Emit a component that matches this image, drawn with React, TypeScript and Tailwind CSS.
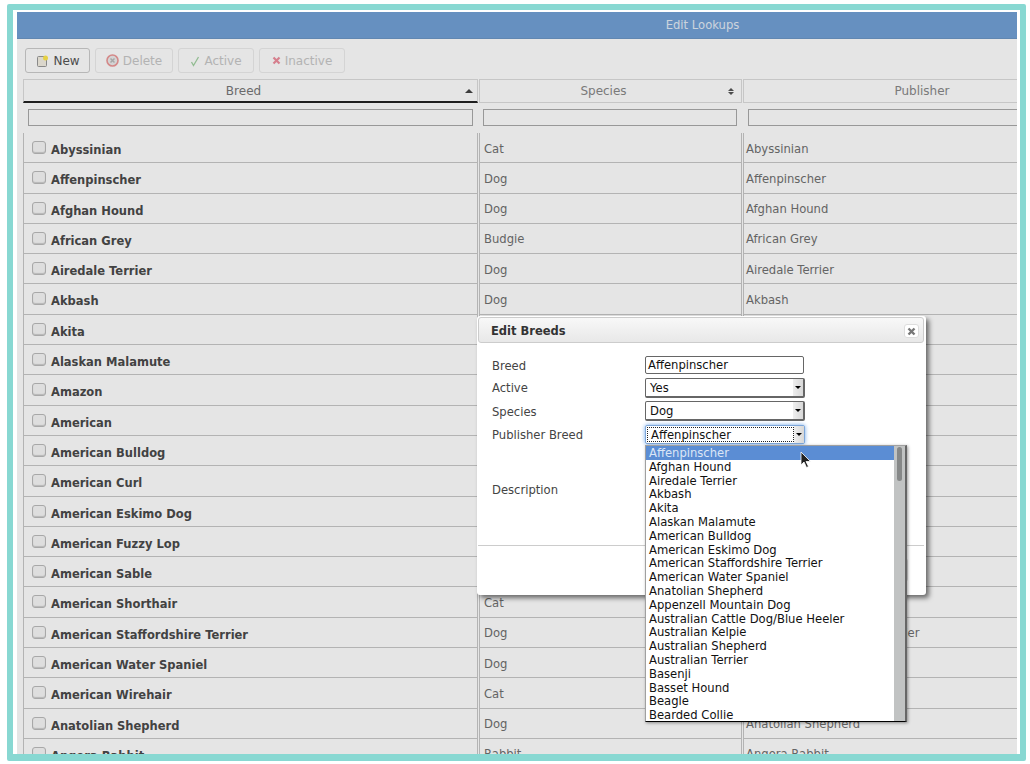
import React from 'react';

const rows = [
  ['Abyssinian', 'Cat', 'Abyssinian'],
  ['Affenpinscher', 'Dog', 'Affenpinscher'],
  ['Afghan Hound', 'Dog', 'Afghan Hound'],
  ['African Grey', 'Budgie', 'African Grey'],
  ['Airedale Terrier', 'Dog', 'Airedale Terrier'],
  ['Akbash', 'Dog', 'Akbash'],
  ['Akita', 'Dog', 'Akita'],
  ['Alaskan Malamute', 'Dog', 'Alaskan Malamute'],
  ['Amazon', 'Parrot', 'Amazon'],
  ['American', 'Rabbit', 'American'],
  ['American Bulldog', 'Dog', 'American Bulldog'],
  ['American Curl', 'Cat', 'American Curl'],
  ['American Eskimo Dog', 'Dog', 'American Eskimo Dog'],
  ['American Fuzzy Lop', 'Rabbit', 'American Fuzzy Lop'],
  ['American Sable', 'Rabbit', 'American Sable'],
  ['American Shorthair', 'Cat', 'American Shorthair'],
  ['American Staffordshire Terrier', 'Dog', 'American Staffordshire Terrier'],
  ['American Water Spaniel', 'Dog', 'American Water Spaniel'],
  ['American Wirehair', 'Cat', 'American Wirehair'],
  ['Anatolian Shepherd', 'Dog', 'Anatolian Shepherd'],
  ['Angora Rabbit', 'Rabbit', 'Angora Rabbit'],
];

const breedOptions = [
  'Affenpinscher',
  'Afghan Hound',
  'Airedale Terrier',
  'Akbash',
  'Akita',
  'Alaskan Malamute',
  'American Bulldog',
  'American Eskimo Dog',
  'American Staffordshire Terrier',
  'American Water Spaniel',
  'Anatolian Shepherd',
  'Appenzell Mountain Dog',
  'Australian Cattle Dog/Blue Heeler',
  'Australian Kelpie',
  'Australian Shepherd',
  'Australian Terrier',
  'Basenji',
  'Basset Hound',
  'Beagle',
  'Bearded Collie',
];

const SelectBox = ({ value, focused }: { value: string; focused?: boolean }) => (
  <div
    className={`flex w-[160px] items-center rounded-[2px] border bg-white text-[#111] ${
      focused
        ? 'h-[19px] border-[#7da7da] shadow-[0_0_4px_#6ea6ea]'
        : 'h-[20px] border-[#666] border-r-2 border-b-2'
    }`}
  >
    <div
      className={`ml-[1px] flex h-[15px] flex-1 items-center pl-[3px] ${
        focused ? 'border border-dotted border-[#222] pt-[2px]' : 'pt-[3px]'
      }`}
    >
      {value}
    </div>
    <div className="flex h-full w-[10px] items-center justify-center bg-gradient-to-r from-[#eee] to-[#d8d8d8]">
      <div className="h-0 w-0 border-x-[3px] border-t-[3px] border-x-transparent border-t-black" />
    </div>
  </div>
);

const ToolButton = ({
  width,
  label,
  dim,
  children,
}: {
  width: string;
  label: string;
  dim?: boolean;
  children: React.ReactNode;
}) => (
  <div
    className={`flex h-[25px] items-center justify-center gap-[4px] rounded-[3px] border ${width} ${
      dim ? 'border-[#ececec] text-[#c8c8c8]' : 'border-[#ccc] text-[#555]'
    }`}
  >
    <div className={dim ? 'opacity-50' : ''}>{children}</div>
    <span>{label}</span>
  </div>
);

export default function App() {
  return (
    <div className="h-[764px] w-[1030px] overflow-hidden bg-white pl-[7px] pt-[4px] text-[12px] [font-family:'DejaVu_Sans',sans-serif]">
      <div className="h-[757px] w-[1019px] overflow-hidden rounded-[2px] border-[6px] border-b-[7px] border-[#88d8d2] bg-white pl-[4px] pr-[3px] pt-[2px]">
        <div className="relative flex h-full flex-col overflow-hidden bg-white">
          {/* title */}
          <div className="flex h-[27px] shrink-0 items-center justify-center border-b border-[#6d97c6] bg-[#72a1d6] pt-[2px] text-[11.6px] text-[#e4ecf6]">
            <span className="ml-[371px]">Edit Lookups</span>
          </div>

          {/* toolbar */}
          <div className="flex h-[40px] shrink-0 items-end gap-[5px] pb-[6px] pl-[8px]">
            <ToolButton width="w-[65px]" label="New">
              <svg className="ml-[2px]" width="12" height="12" viewBox="0 0 12 12">
                <rect x="0.5" y="1.5" width="9" height="10" rx="1" fill="#f4f0e4" stroke="#999" />
                <circle cx="8.5" cy="3" r="2.5" fill="#ffe84d" />
              </svg>
            </ToolButton>
            <ToolButton width="w-[78px]" label="Delete" dim>
              <svg width="13" height="13" viewBox="0 0 13 13">
                <circle cx="6.5" cy="6.5" r="5.5" fill="#ddd" stroke="#d33" strokeWidth="1.6" />
                <path d="M4.5 4.5l4 4M8.5 4.5l-4 4" stroke="#777" strokeWidth="1.5" />
              </svg>
            </ToolButton>
            <ToolButton width="w-[76px]" label="Active" dim>
              <svg width="10" height="12" viewBox="0 0 10 12">
                <path d="M1.500 7l2 3.500L8.500 2" fill="none" stroke="#4aa84a" strokeWidth="1.3" />
              </svg>
            </ToolButton>
            <ToolButton width="w-[86px]" label="Inactive" dim>
              <svg width="9" height="9" viewBox="0 0 9 9">
                <path d="M1.500 1.500l6 6M7.500 1.500l-6 6" stroke="#e02040" strokeWidth="2.2" />
              </svg>
            </ToolButton>
          </div>

          {/* grid */}
          <div className="ml-[6px] w-[1120px]">
            <div className="grid h-[24px] grid-cols-[455px_263px_372px] gap-x-[1px] text-[#888]">
              <div className="relative flex items-center justify-center border border-b-2 border-[#ddd] border-b-[#222] pr-[14px] text-[#777]">
                Breed
                <div className="absolute right-[4px] top-[9px] h-0 w-0 border-x-[4px] border-b-[4px] border-x-transparent border-b-[#444]" />
              </div>
              <div className="relative flex items-center justify-center border border-[#ddd] pr-[14px]">
                Species
                <div className="absolute right-[7px] top-[8px] flex flex-col gap-[1px]">
                  <div className="h-0 w-0 border-x-[3px] border-b-[3px] border-x-transparent border-b-[#555]" />
                  <div className="h-0 w-0 border-x-[3px] border-t-[3px] border-x-transparent border-t-[#555]" />
                </div>
              </div>
              <div className="flex items-center justify-center border border-[#ddd] pr-[14px]">
                Publisher
              </div>
            </div>
            <div className="grid h-[30px] grid-cols-[455px_263px_372px] items-center gap-x-[1px] pb-[2px]">
              <div className="mx-[5px] h-[17px] border border-[#aaa]" />
              <div className="ml-[4px] mr-[5px] h-[17px] border border-[#aaa]" />
              <div className="ml-[5px] h-[17px] border border-[#aaa]" />
            </div>
            {rows.map(([breed, species, publisher]) => (
              <div
                key={breed}
                className="grid h-[30.3px] grid-cols-[455px_263px_372px] gap-x-[1px] text-[11.6px] text-[#707070]"
              >
                <div className="flex items-start gap-[5px] border-x border-b border-[#c8c8c8] pl-[8px] pt-[8px] text-[11.5px] font-bold text-[#4a4a4a]">
                  <div className="h-[13px] w-[14px] shrink-0 rounded-[3px] border border-[#bbb] bg-[#f8f8f8] shadow-[inset_0_-1px_1px_#ccc]" />
                  <span className="pt-[1px]">{breed}</span>
                </div>
                <div className="border-x border-b border-[#c8c8c8] pl-[4px] pt-[7.5px]">{species}</div>
                <div className="border-x border-b border-[#c8c8c8] pl-[2px] pt-[7.5px]">{publisher}</div>
              </div>
            ))}
          </div>

          {/* modal backdrop */}
          <div className="absolute inset-0 bg-black/10" />

          {/* dialog */}
          <div className="absolute left-[460px] top-[304px] flex h-[279px] w-[449px] flex-col rounded-[3px] bg-white py-[1px] pl-[1px] text-[11.6px] shadow-[3px_3px_5px_rgba(0,0,0,0.55)]">
            <div className="mr-[2px] flex h-[26px] shrink-0 items-center justify-between rounded-[3px] border border-[#ccc] bg-gradient-to-b from-[#f8f8f8] to-[#e8e8e8] pl-[12px] pr-[4px] text-[11.5px] font-bold text-[#333]">
              <span className="pt-[3px]">Edit Breeds</span>
              <div className="mt-[2px] flex h-[14px] w-[15px] items-center justify-center rounded-[3px] border border-[#ddd] bg-white">
                <svg width="9" height="9" viewBox="0 0 9 9">
                  <path d="M1.500 1.500l6 6M7.500 1.500l-6 6" stroke="#777" strokeWidth="2.4" />
                </svg>
              </div>
            </div>

            <div className="grid grid-cols-[153px_auto] content-start pl-[14px] pt-[13px] text-[#444]">
              <div className="flex h-[18px] items-center pt-[4px]">Breed</div>
              <div className="flex h-[18px] w-[159px] items-center rounded-[2px] border border-[#666] pl-[2px] pt-[2px] text-[#111]">
                Affenpinscher
              </div>
              <div className="mt-[4px] flex h-[20px] items-center pt-[2px]">Active</div>
              <div className="mt-[4px]">
                <SelectBox value="Yes" />
              </div>
              <div className="mt-[3px] flex h-[20px] items-center pt-[4px]">Species</div>
              <div className="mt-[3px]">
                <SelectBox value="Dog" />
              </div>
              <div className="mt-[4px] flex h-[19px] items-center pt-[2px]">Publisher Breed</div>
              <div className="mt-[4px]">
                <SelectBox value="Affenpinscher" focused />
              </div>
              <div className="mt-[6px] flex h-[80px] items-center pt-[2px]">Description</div>
              <div className="mt-[6px] h-[80px] w-[262px] rounded-[2px] border border-[#666] border-r-2" />
            </div>

            <div className="mr-[2px] mt-[15px] flex flex-1 items-center justify-end border-t border-[#ccc] pr-[16px]">
              <div className="flex h-[24px] w-[60px] items-center justify-center rounded-[3px] border border-[#ddd] text-[#555]">
                Save
              </div>
            </div>

            {/* open select list */}
            <div className="absolute left-[168px] top-[129px] flex h-[277px] w-[262px] border border-r-2 border-[#a0a0a0] border-b-black border-r-[#666] bg-white text-[#111] shadow-[1px_1px_3px_rgba(0,0,0,0.4)]">
              <div className="flex-1 leading-[15.4px]">
                {breedOptions.map((name, i) => (
                  <div
                    key={name}
                    className={`h-[13.8px] pl-[3px] ${i === 0 ? 'bg-[#5b8dd4] text-[#dbe6f6]' : ''}`}
                  >
                    {name}
                  </div>
                ))}
              </div>
              <div className="w-[11px] shrink-0 bg-[#c1c3c3] pl-[3px] pt-[1px]">
                <div className="h-[34px] w-[5px] rounded-[3px] bg-[#868888]" />
              </div>
            </div>
          </div>

          {/* mouse pointer */}
          <svg className="absolute left-[783px] top-[439px]" width="13" height="18" viewBox="0 0 13 18">
            <path d="M1 1v13l3-3 2.500 5.500 2-1-2.500-5h4.500z" fill="#222" stroke="#fff" strokeWidth="0.8" />
          </svg>
        </div>
      </div>
    </div>
  );
}
